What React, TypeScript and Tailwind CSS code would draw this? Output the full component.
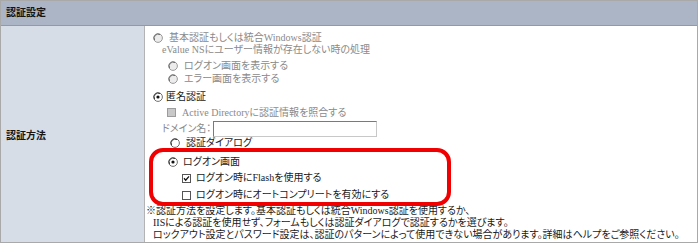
const jp = "font-['Liberation_Serif','Noto_Sans_CJK_JP',serif] [font-feature-settings:'palt']";

type RadioProps = { checked?: boolean; disabled?: boolean };

const Radio = ({ checked, disabled }: RadioProps) => (
  <svg width="10" height="10" viewBox="0 0 10 10" className="shrink-0">
    <circle cx="5" cy="5" r="4.4" fill={disabled ? '#ececec' : '#ffffff'} stroke={disabled ? '#9a9a9a' : '#6f6f6f'} strokeWidth="1" />
    <path d="M1.6 7 A4 4 0 0 1 7 1.6" fill="none" stroke={disabled ? '#6e6e6e' : '#404040'} strokeWidth="1" />
    {checked && <circle cx="5" cy="5" r="1.6" fill="#111" />}
  </svg>
);

type CheckProps = { checked?: boolean; disabled?: boolean };

const Check = ({ checked, disabled }: CheckProps) => (
  <svg width="9" height="9" viewBox="0 0 9 9" className="shrink-0">
    <rect x="0.5" y="0.5" width="8" height="8" fill={disabled ? '#c8c8c8' : '#ffffff'} stroke={disabled ? '#9c9c9c' : '#555555'} strokeWidth="1" />
    {checked && <path d="M2 4.3 L3.7 6.2 L7 2.4" fill="none" stroke="#111" strokeWidth="1.3" />}
  </svg>
);

export default function App() {
  return (
    <div className={`w-[700px] h-[245px] bg-white text-[10px] leading-[12px] text-[#1a1a1a] ${jp}`}>
      <div className="w-[698px] h-[243px] border border-[#a9a9a9] flex flex-col">
        {/* header */}
        <div className="h-[25px] bg-[#abb5c5] border-b border-[#929aa8] flex items-center pl-[5px] text-[#141414] font-semibold">
          認証設定
        </div>

        {/* body */}
        <div className="flex flex-1">
          <div className="w-[144px] bg-[#d6dde6] border-r border-[#b3b3b3] flex items-center pl-[5px] pt-[3px] text-[#141414] font-semibold">
            認証方法
          </div>

          <div className="flex-1 relative pt-[6px] pl-[8px]">
            <div className="h-[12px] flex items-center gap-[6px] text-[#8a8a8a]">
              <Radio disabled />
              <span>基本認証もしくは統合Windows認証</span>
            </div>
            <div className="h-[12px] flex items-center pl-[9px] text-[#8a8a8a]">
              eValue NSにユーザー情報が存在しない時の処理
            </div>
            <div className="mt-[3px] h-[13px] flex items-center gap-[6px] pl-[15px] text-[#8a8a8a]">
              <Radio disabled />
              <span>ログオン画面を表示する</span>
            </div>
            <div className="h-[13px] flex items-center gap-[6px] pl-[15px] text-[#8a8a8a]">
              <Radio disabled />
              <span>エラー画面を表示する</span>
            </div>

            <div className="mt-[6px] h-[12px] flex items-center gap-[3px]">
              <Radio checked />
              <span>匿名認証</span>
            </div>
            <div className="mt-[3px] h-[13px] flex items-center gap-[6px] pl-[14px] text-[#8a8a8a]">
              <Check disabled />
              <span>Active Directoryに認証情報を照合する</span>
            </div>
            <div className="mt-[1px] h-[17px] flex items-center gap-[2px] pl-[9px] text-[#8a8a8a]">
              <span>ドメイン名：</span>
              <div className="w-[164px] h-[16px] border border-[#7a7a7a] border-r-[#c8c8c8] border-b-[#c8c8c8] bg-white" />
            </div>
            <div className="h-[12px] flex items-center gap-[6px] pl-[17px]">
              <Radio />
              <span>認証ダイアログ</span>
            </div>

            <div className="mt-[6px] h-[13px] flex items-center gap-[5px] pl-[15px]">
              <Radio checked />
              <span>ログオン画面</span>
            </div>
            <div className="mt-[3px] h-[14px] flex items-center gap-[5px] pl-[29px]">
              <Check checked />
              <span>ログオン時にFlashを使用する</span>
            </div>
            <div className="mt-[3px] h-[14px] flex items-center gap-[5px] pl-[29px]">
              <Check />
              <span>ログオン時にオートコンプリートを有効にする</span>
            </div>

            <div className="mt-[3px] -ml-[7px]">
              <div className="h-[12px]">※認証方法を設定します。基本認証もしくは統合Windows認証を使用するか、</div>
              <div className="h-[12px] pl-[7px]">IISによる認証を使用せず、フォームもしくは認証ダイアログで認証するかを選びます。</div>
              <div className="h-[12px] pl-[7px]">ロックアウト設定とパスワード設定は、認証のパターンによって使用できない場合があります。詳細はヘルプをご参照ください。</div>
            </div>

            {/* annotation */}
            <div className="absolute left-[4px] top-[122px] w-[302px] h-[58px] border-[4px] border-[#f00000] rounded-[14px] pointer-events-none" />
          </div>
        </div>
      </div>
    </div>
  );
}
